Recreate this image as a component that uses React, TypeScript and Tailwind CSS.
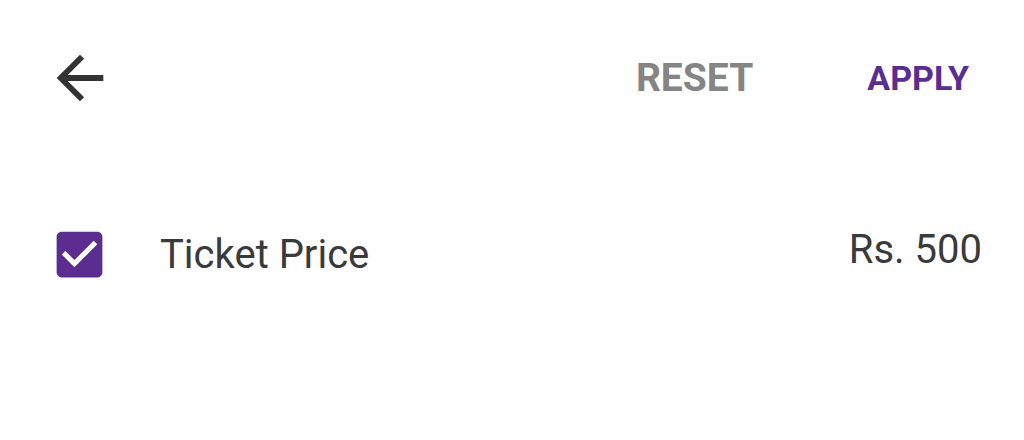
import { useState } from 'react';

const ArrowBack = () => (
  <svg viewBox="0 0 24 24" className="w-[70px] h-[70px]" fill="#333333">
    <path d="M20 11H7.83l5.59-5.59L12 4l-8 8 8 8 1.41-1.41L7.83 13H20v-2z" />
  </svg>
);

const CheckBoxIcon = ({ checked }: { checked: boolean }) => (
  <svg viewBox="0 0 24 24" className="w-[61px] h-[61px]" fill={checked ? '#5b2d91' : '#757575'}>
    {checked ? (
      <path d="M19 3H5c-1.11 0-2 .9-2 2v14c0 1.1.89 2 2 2h14c1.11 0 2-.9 2-2V5c0-1.1-.89-2-2-2zm-9 14l-5-5 1.41-1.41L10 14.17l7.59-7.59L19 8l-9 9z" />
    ) : (
      <path d="M19 5v14H5V5h14m0-2H5c-1.1 0-2 .9-2 2v14c0 1.1.9 2 2 2h14c1.1 0 2-.9 2-2V5c0-1.1-.9-2-2-2z" />
    )}
  </svg>
);

export default function App() {
  const [checked, setChecked] = useState(true);

  return (
    <div className="w-[1024px] h-[440px] bg-white pt-[43px] font-['Roboto',sans-serif]">
      {/* Toolbar */}
      <div className="flex items-center h-[70px] pl-[45px] pr-[55px]">
        <button type="button" className="w-[70px] h-[70px] flex items-center justify-center">
          <ArrowBack />
        </button>
        <div className="flex-1" />
        <button type="button" className="text-[39px] leading-none font-bold text-[#858585]">
          RESET
        </button>
        <button type="button" className="ml-[114px] text-[34px] leading-none font-bold text-[#5b2d91]">
          APPLY
        </button>
      </div>

      {/* Filter row */}
      <div className="flex items-center h-[61px] mt-[111px] pl-[49px] pr-[42px]">
        <button type="button" onClick={() => setChecked(!checked)}>
          <CheckBoxIcon checked={checked} />
        </button>
        <span className="ml-[50px] text-[40px] leading-none text-[#3a3a3a]">Ticket Price</span>
        <div className="flex-1" />
        <span className="mb-[10px] text-[40px] leading-none text-[#3a3a3a]">Rs. 500</span>
      </div>
    </div>
  );
}
